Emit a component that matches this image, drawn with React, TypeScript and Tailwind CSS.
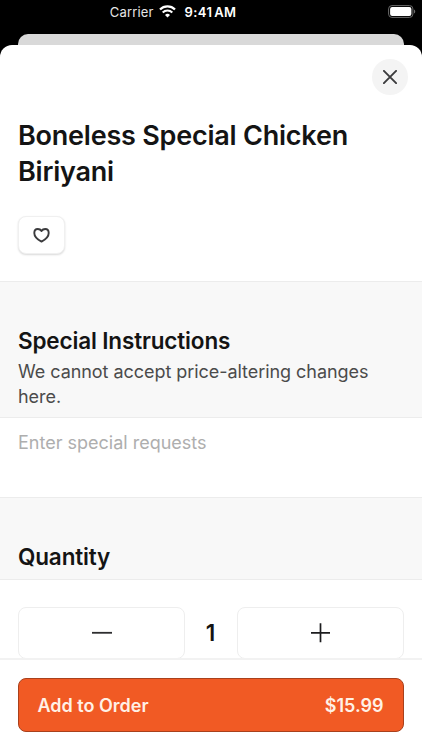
import { useState } from 'react';

const UNIT_PRICE = 15.99;

function StatusBar() {
  return (
    <div className="h-[34px] flex-shrink-0 grid grid-cols-[1fr_auto_1fr] pt-[3px] text-white text-[13px] leading-[18px]">
      <div className="flex justify-end h-[18px]">
        <span className="tracking-[0.15px] text-[#e6e6e6]">Carrier</span>
        <svg className="w-[17px] h-[13px] mt-[2px] ml-[5px] mr-[9px]" viewBox="0 0 17 13" fill="none">
          <path d="M1 4.5a10.7 10.7 0 0 1 15 0" stroke="white" strokeWidth="2.3" />
          <path d="M3.7 7.5a6.8 6.8 0 0 1 9.6 0" stroke="white" strokeWidth="2.1" />
          <path d="M8.5 12.6 6 10a3.5 3.5 0 0 1 5 0Z" fill="white" />
        </svg>
      </div>
      <span className="w-[53px] font-semibold whitespace-nowrap tracking-[0.4px] [word-spacing:-1.8px]">
        9:41 AM
      </span>
      <div className="flex justify-end pr-[6px]">
        <svg className="w-[28px] h-[13px] mt-[2px]" viewBox="0 0 28 13" fill="none">
          <rect x="0.6" y="0.6" width="24.3" height="11.8" rx="3.3" stroke="#6b6b6b" />
          <rect x="2.1" y="2.1" width="21.3" height="8.8" rx="2" fill="white" />
          <path d="M26 4.5v4c1.7-.7 1.7-3.3 0-4Z" fill="#6b6b6b" />
        </svg>
      </div>
    </div>
  );
}

export default function App() {
  const [quantity, setQuantity] = useState(1);
  const [favorite, setFavorite] = useState(false);
  const [notes, setNotes] = useState('');

  return (
    <div className="w-[422px] h-[750px] bg-black overflow-hidden flex flex-col font-[Inter,sans-serif] text-[#141414]">
      <StatusBar />

      {/* Card stacked behind the sheet */}
      <div className="h-[11px] mx-[18px] flex-shrink-0 bg-[#d9d9d9] rounded-t-[10px]" />

      <div className="flex-1 min-h-0 bg-white rounded-t-[12px] flex flex-col">
        <div className="flex-1 min-h-0 overflow-hidden">
          <div className="h-[236px] px-[18px]">
            <div className="flex justify-end pt-[13.5px] -mr-[4px]">
              <button
                className="w-[36px] h-[36px] rounded-full bg-[#f4f4f4] flex items-center justify-center"
                aria-label="Close"
              >
                <svg className="w-[14px] h-[14px]" viewBox="0 0 14 14" fill="none" stroke="#3b3b3d" strokeWidth="1.9" strokeLinecap="round">
                  <path d="M0.9 0.9 13.1 13.1M13.1 0.9 0.9 13.1" />
                </svg>
              </button>
            </div>
            <h1 className="mt-[23px] text-[27px] leading-[36px] font-semibold tracking-[-0.22px]">
              Boneless Special Chicken
              <br />
              Biriyani
            </h1>
            <button
              onClick={() => setFavorite(!favorite)}
              className="mt-[26px] w-[47px] h-[38px] rounded-[8px] bg-white border border-[#f0f0f0] shadow-[0_1px_2px_rgba(0,0,0,0.15)] flex items-center justify-center"
              aria-label="Favorite"
            >
              <svg className="w-[17px] h-[16px]" viewBox="0 0 17 16" fill={favorite ? '#3b3b3d' : 'none'} stroke="#3b3b3d" strokeWidth="1.9" strokeLinejoin="round">
                <path d="M8.5 14.6C7 13.8 1.3 10.200 1.3 5.900 1.3 3.600 2.800 2 4.800 2 6.400 2 7.700 2.700 8.5 4 9.300 2.700 10.600 2 12.200 2 14.200 2 15.700 3.600 15.700 5.900 15.700 10.200 10 13.800 8.5 14.6Z" />
              </svg>
            </button>
          </div>

          <div className="h-[137px] px-[18px] pt-[45px] bg-[#f8f8f8] border-y border-[#ececec]">
            <h2 className="text-[22.5px] leading-[28px] font-semibold tracking-[-0.15px]">Special Instructions</h2>
            <p className="mt-[4px] text-[18px] leading-[25px] tracking-[-0.05px] text-[#4b4b4b]">
              We cannot accept price-altering changes here.
            </p>
          </div>

          <textarea
            value={notes}
            onChange={(e) => setNotes(e.target.value)}
            placeholder="Enter special requests"
            className="block w-full h-[79px] px-[18px] pt-[12px] text-[18px] leading-[25px] resize-none outline-none placeholder:text-[#aeaeae]"
          />

          <div className="h-[83px] px-[18px] pt-[45px] bg-[#f8f8f8] border-y border-[#ececec]">
            <h2 className="text-[22.5px] leading-[28px] font-semibold tracking-[-0.15px]">Quantity</h2>
          </div>

          <div className="flex items-center px-[18px] pt-[27px]">
            <button
              onClick={() => setQuantity(Math.max(1, quantity - 1))}
              className="w-[167px] h-[52px] rounded-[8px] border border-[#eeeeee] flex items-center justify-center"
              aria-label="Decrease quantity"
            >
              <svg className="w-[20px] h-[20px]" viewBox="0 0 20 20" stroke="#2d2d2f" strokeWidth="1.8">
                <path d="M0 9.8h20" />
              </svg>
            </button>
            <span className="flex-1 pr-[1px] text-center text-[22.5px] leading-[28px] font-semibold">{quantity}</span>
            <button
              onClick={() => setQuantity(quantity + 1)}
              className="w-[167px] h-[52px] rounded-[8px] border border-[#eeeeee] flex items-center justify-center"
              aria-label="Increase quantity"
            >
              <svg className="w-[20px] h-[20px]" viewBox="0 0 20 20" stroke="#1c1c1e" strokeWidth="1.7">
                <path d="M0 9.8h19M9.5 0.3v19" />
              </svg>
            </button>
          </div>
        </div>

        <div className="h-[92px] flex-shrink-0 px-[18px] pt-[18px] bg-white border-t-2 border-[#f2f2f2]">
          <button className="w-full h-[54px] pl-[18.5px] pr-[19.5px] rounded-[8px] bg-[#f15a24] border border-[#a9401c] flex items-center justify-between text-[18px] font-semibold text-[#fff1e6]">
            <span>Add to Order</span>
            <span>${(UNIT_PRICE * quantity).toFixed(2)}</span>
          </button>
        </div>
      </div>
    </div>
  );
}
